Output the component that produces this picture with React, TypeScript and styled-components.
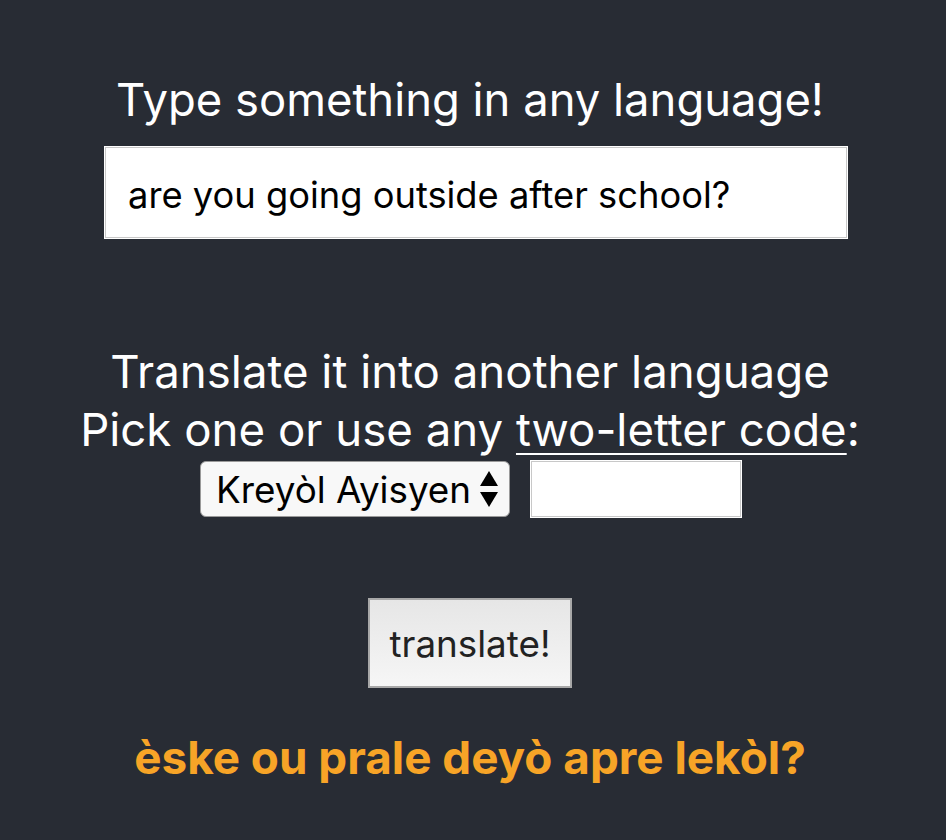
import React from "react";
import styled, { createGlobalStyle } from "styled-components";

const Global = createGlobalStyle`
  html, body { margin: 0; padding: 0; background: #282c34; }
  body { font-family: Inter, "Noto Sans", sans-serif; }
`;

const Page = styled.div`
  display: flex;
  flex-direction: column;
  align-items: center;
  padding-top: 72px;
  padding-right: 6px;
  min-height: 840px;
  box-sizing: border-box;
  color: #fff;
`;

const Heading = styled.div`
  font-size: 45.4px;
  line-height: 56px;
  text-align: center;
`;

const MainInput = styled.input`
  margin-top: 18px;
  margin-left: 12px;
  width: 744px;
  height: 93px;
  box-sizing: border-box;
  border: 1px solid #fff;
  box-shadow: inset 0 0 0 1px #c8c8c8;
  background: #fff;
  padding: 0 23px;
  padding-top: 4px;
  font-family: Inter, "Noto Sans", sans-serif;
  font-size: 36.3px;
  color: #000;
  outline: none;
`;

const Section = styled.div`
  margin-top: 104px;
  display: flex;
  flex-direction: column;
  align-items: center;
`;

const Line = styled.div`
  font-size: 45.6px;
  line-height: 58px;
  text-align: center;
`;

const CodeLink = styled.a`
  color: #fff;
  text-decoration: underline;
  text-underline-offset: 7px;
  text-decoration-thickness: 2px;
`;

const Controls = styled.div`
  display: flex;
  align-items: center;
  gap: 20px;
  margin-top: 1px;
  padding-left: 2px;
`;

const SelectWrap = styled.div`
  position: relative;
  width: 310px;
  height: 56px;
`;

const Select = styled.select`
  appearance: none;
  -webkit-appearance: none;
  width: 100%;
  height: 100%;
  box-sizing: border-box;
  border: 1px solid #9a9a9a;
  border-radius: 6px;
  background: #f8f8f8;
  font-family: Inter, "Noto Sans", sans-serif;
  font-size: 36.8px;
  color: #000;
  padding: 0 40px 0 15px;
  outline: none;
`;

const Arrows = styled.svg`
  position: absolute;
  right: 11px;
  top: 10px;
  pointer-events: none;
`;

const CodeInput = styled.input`
  width: 212px;
  height: 58px;
  box-sizing: border-box;
  border: 1px solid #fff;
  box-shadow: inset 0 0 0 1px #c8c8c8;
  background: #fff;
  outline: none;
`;

const Button = styled.button`
  margin-top: 80px;
  width: 204px;
  height: 90px;
  box-sizing: border-box;
  border: 2px solid #a8a8a8;
  background: linear-gradient(#e6e6e6, #f6f6f6);
  font-family: Inter, "Noto Sans", sans-serif;
  font-size: 36.8px;
  color: #222;
  padding: 0;
`;

const Result = styled.div`
  margin-top: 42px;
  font-size: 45.8px;
  line-height: 56px;
  font-weight: 700;
  color: #f7a427;
  text-align: center;
`;

export default function App() {
  return (
    <>
      <Global />
      <Page>
        <Heading>Type something in any language!</Heading>
        <MainInput defaultValue="are you going outside after school?" />
        <Section>
          <Line>Translate it into another language</Line>
          <Line>
            Pick one or use any <CodeLink href="#">two-letter code</CodeLink>:
          </Line>
          <Controls>
            <SelectWrap>
              <Select defaultValue="ht">
                <option value="ht">Kreyòl Ayisyen</option>
              </Select>
              <Arrows width="20" height="38" viewBox="0 0 20 38">
                <polygon points="10,0 19,15 1,15" fill="#000" />
                <polygon points="1,21 19,21 10,36" fill="#000" />
              </Arrows>
            </SelectWrap>
            <CodeInput />
          </Controls>
          <Button>translate!</Button>
          <Result>èske ou prale deyò apre lekòl?</Result>
        </Section>
      </Page>
    </>
  );
}
